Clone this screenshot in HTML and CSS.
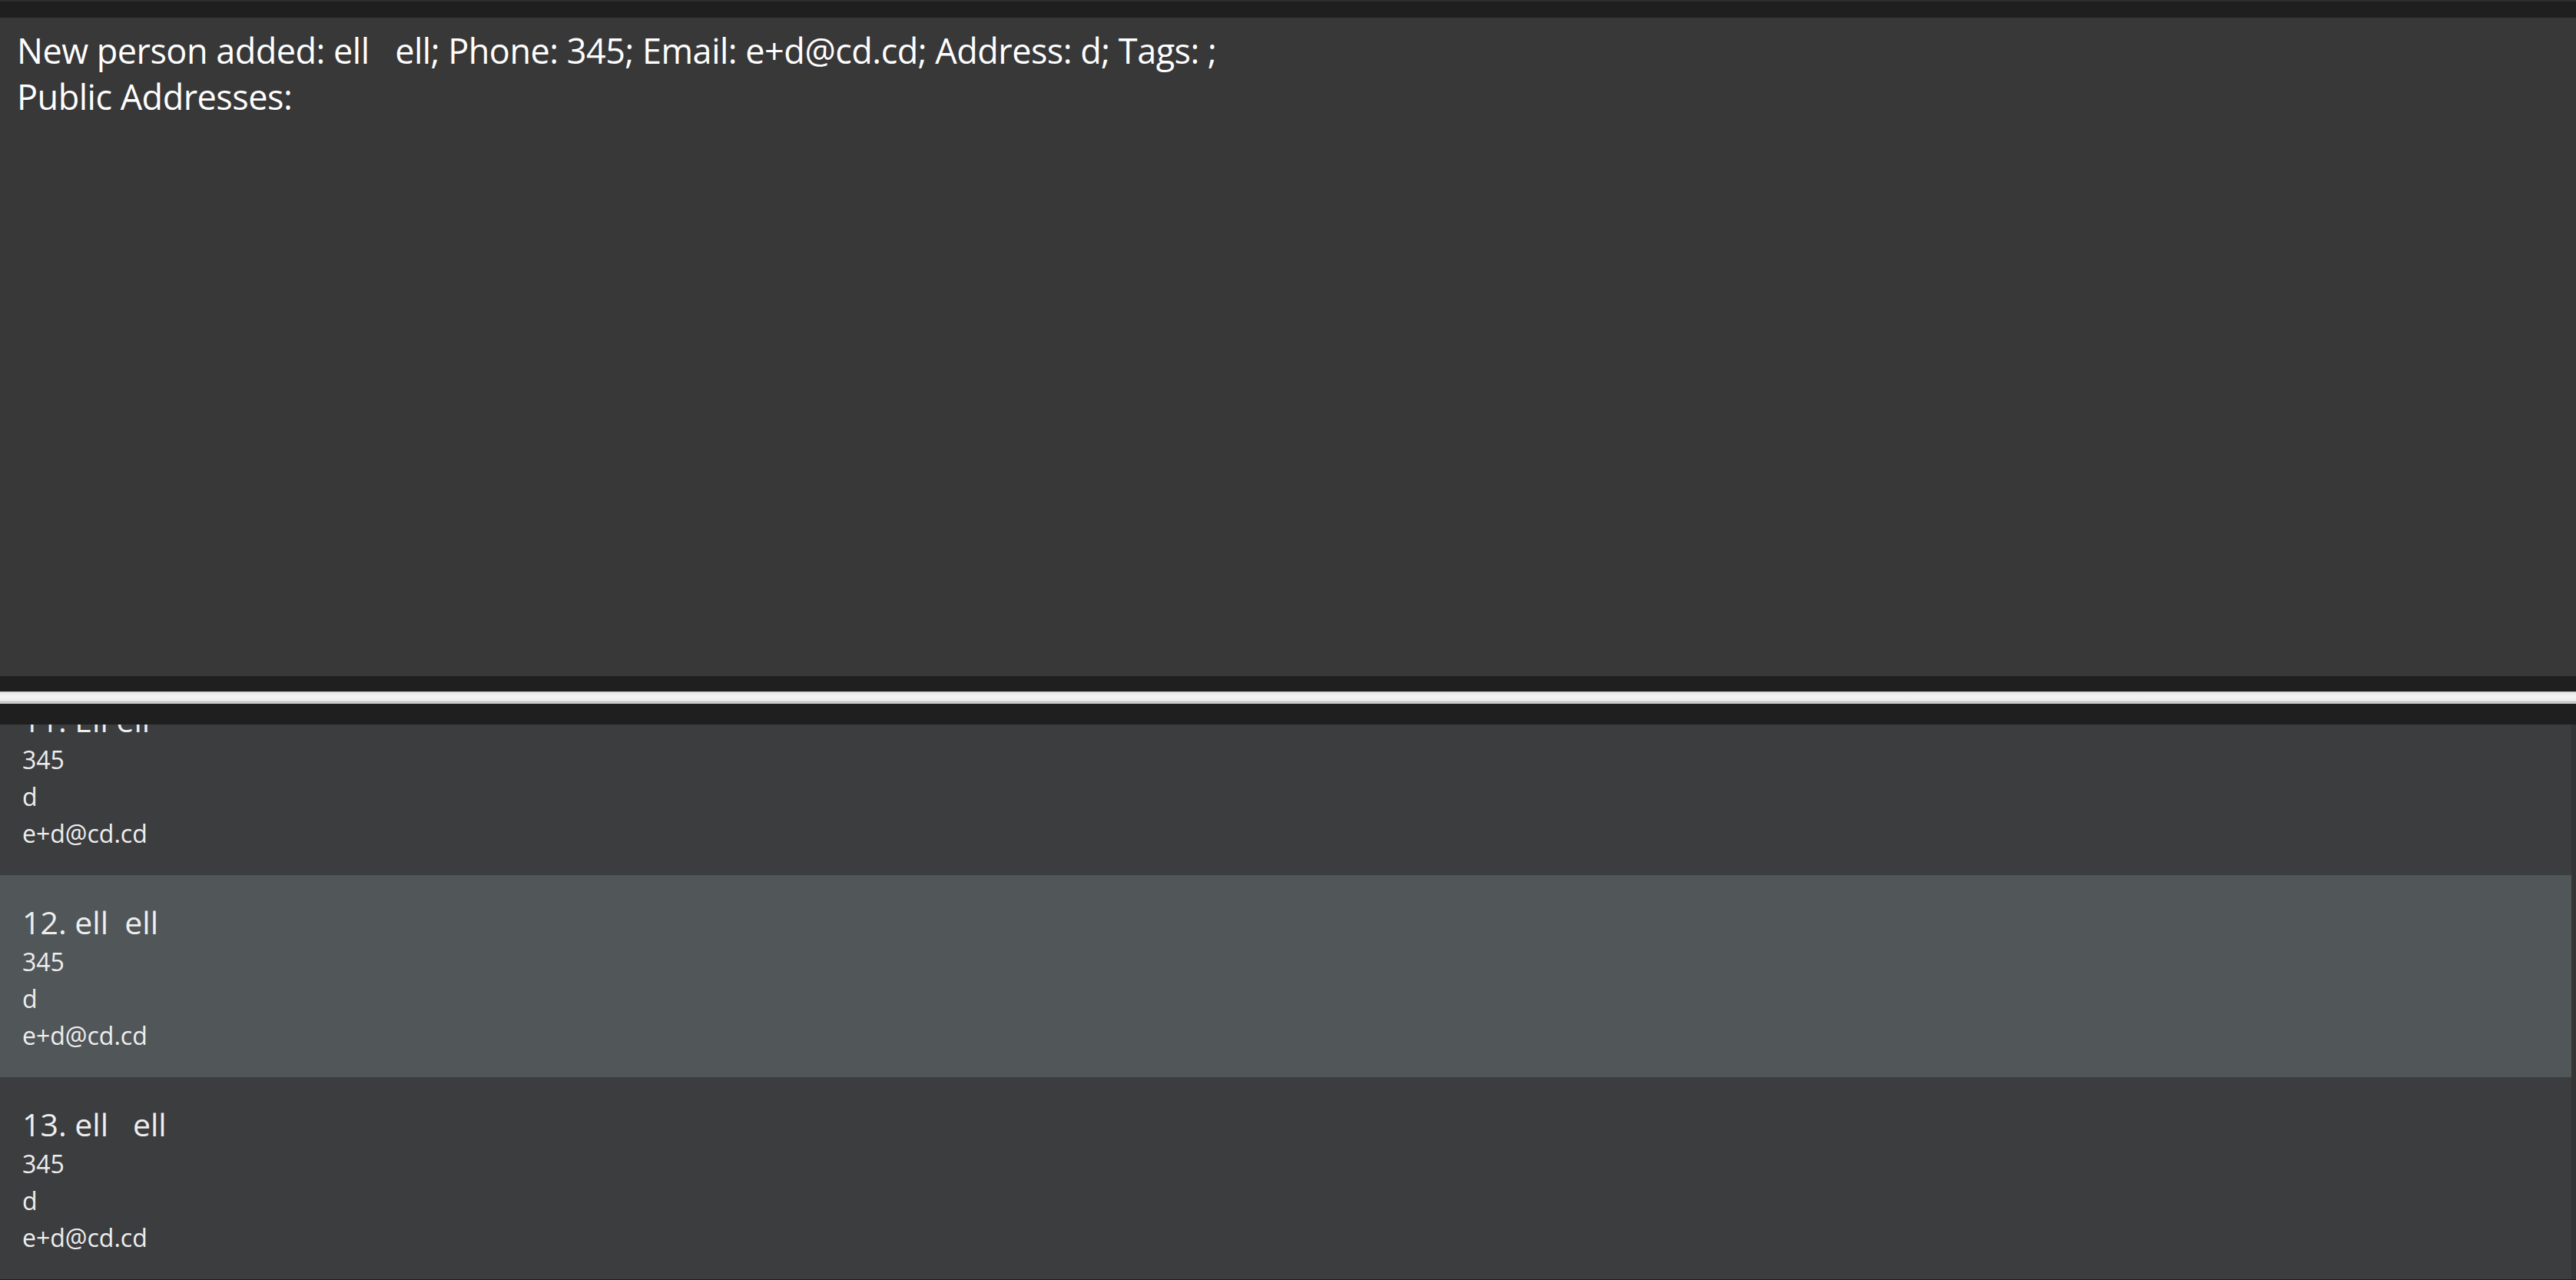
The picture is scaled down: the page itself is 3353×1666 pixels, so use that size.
FILE: index.html
```html
<!DOCTYPE html>
<html>
<head>
<meta charset="utf-8">
<link rel="stylesheet" href="styles.css">
</head>
<body>
<div class="app">
  <div class="topline"></div>
  <div class="topbar"></div>
  <div class="result">
    <div class="result-line">New person added: ell   ell; Phone: 345; Email: e+d@cd.cd; Address: d; Tags: ;</div>
    <div class="result-line">Public Addresses:</div>
  </div>
  <div class="gap-top"></div>
  <div class="splitter"></div>
  <div class="gap-bottom"></div>
  <div class="list-area">
    <div class="list-viewport">
      <div class="list-inner">
        <div class="cell">
          <div class="cell-title">11. Ell ell</div>
          <div class="cell-line">345</div>
          <div class="cell-line">d</div>
          <div class="cell-line">e+d@cd.cd</div>
        </div>
        <div class="cell selected">
          <div class="cell-title">12. ell  ell</div>
          <div class="cell-line">345</div>
          <div class="cell-line">d</div>
          <div class="cell-line">e+d@cd.cd</div>
        </div>
        <div class="cell">
          <div class="cell-title">13. ell   ell</div>
          <div class="cell-line">345</div>
          <div class="cell-line">d</div>
          <div class="cell-line">e+d@cd.cd</div>
        </div>
      </div>
    </div>
    <div class="scrollbar"></div>
  </div>
</div>
</body>
</html>
```
FILE: styles.css
```css
html, body {
  margin: 0;
  padding: 0;
  background: #1f1f1f;
}
.app {
  width: 3353px;
  height: 1666px;
  display: flex;
  flex-direction: column;
  overflow: hidden;
  font-family: "Open Sans", "DejaVu Sans", sans-serif;
}
.topline {
  height: 2px;
  background: #2e2e2e;
}
.topbar {
  height: 21px;
  background: #1f1f1f;
}
.result {
  height: 857px;
  box-sizing: border-box;
  padding: 13px 0 0 22px;
  background: #383838;
  color: #ffffff;
  font-size: 45px;
  letter-spacing: -0.5px;
}
.result-line {
  line-height: 60px;
  white-space: pre;
}
.gap-top {
  height: 20px;
  background: #1f1f1f;
}
.splitter {
  height: 16px;
  background: linear-gradient(to bottom, #c4c4c4 0, #c4c4c4 1px, #e6e6e6 1px, #f4f4f4 6px, #ececec 12px, #c9c9c9 13px, #c9c9c9 16px);
}
.gap-bottom {
  height: 27px;
  background: #1f1f1f;
}
.list-area {
  flex: 1;
  display: flex;
  background: #3c3d3f;
  border-bottom: 1px solid #1f1f1f;
}
.list-viewport {
  flex: 1;
  overflow: hidden;
}
.list-inner {
  margin-top: -67px;
}
.scrollbar {
  width: 6px;
  background: #353535;
}
.cell {
  height: 263px;
  box-sizing: border-box;
  padding: 33px 0 0 29px;
  background: #3c3d3f;
  color: #eeeeee;
}
.cell.selected {
  background: #515659;
}
.cell-title {
  font-size: 41px;
  line-height: 56px;
  white-space: pre;
}
.cell-line {
  font-size: 32px;
  line-height: 48px;
  white-space: pre;
}
```
